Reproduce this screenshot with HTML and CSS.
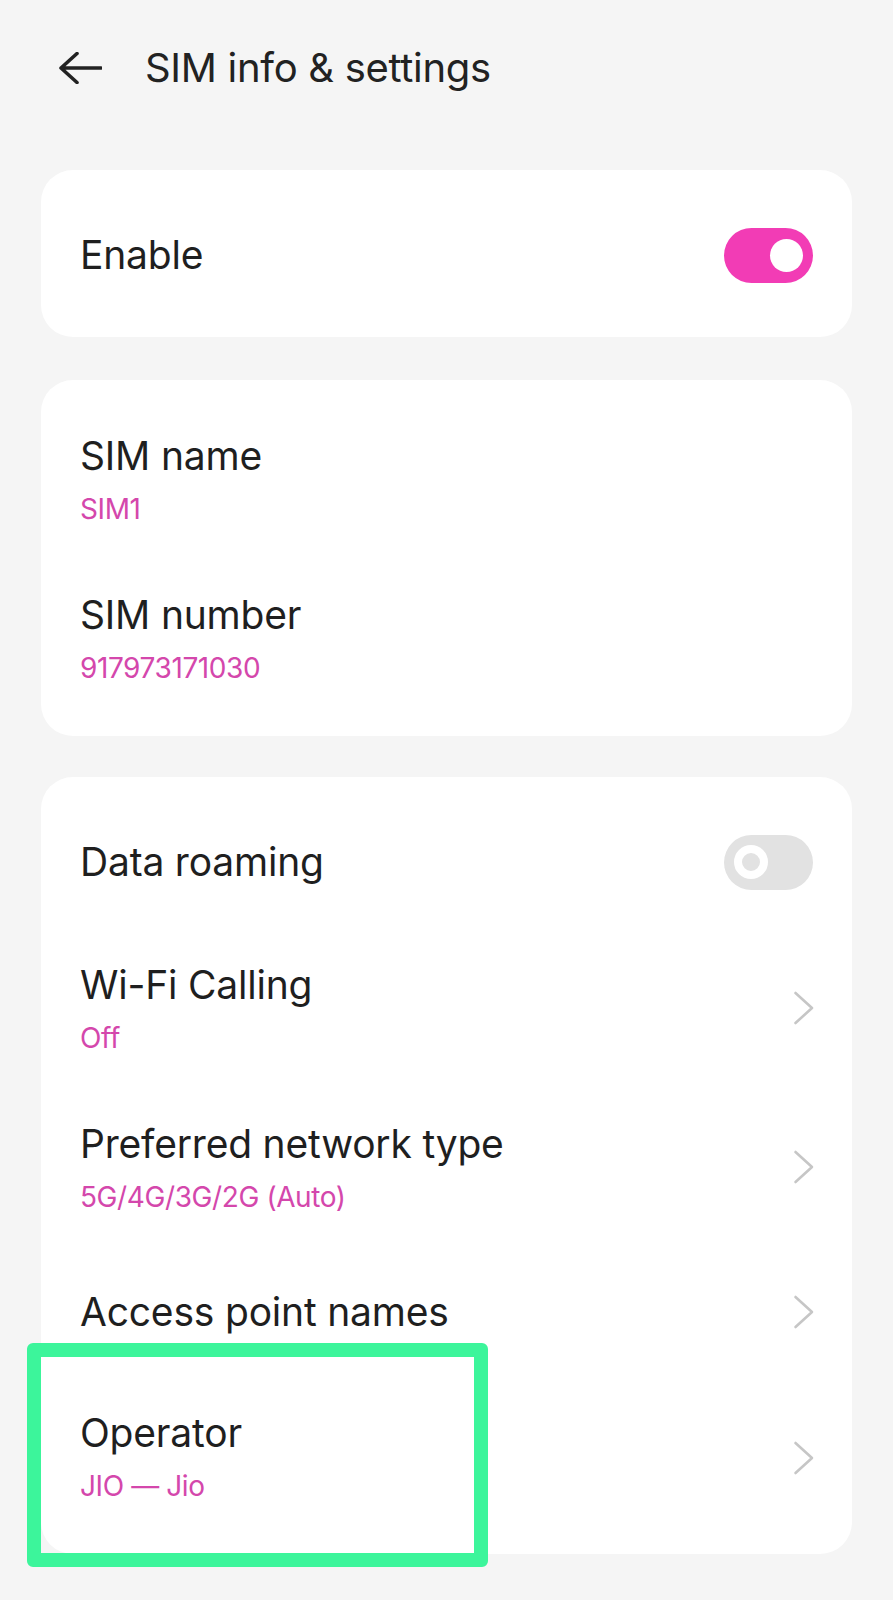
FILE: index.html
```html
<!DOCTYPE html>
<html lang="en">
<head>
<meta charset="utf-8">
<title>SIM info &amp; settings</title>
<link rel="stylesheet" href="styles.css">
</head>
<body>
<div class="page">
  <header class="header">
    <svg class="back" width="44" height="32" viewBox="0 0 44 32" aria-hidden="true">
      <path d="M3 16 H43 M19 1.5 L3 16 L19 30.5" fill="none" stroke="#222" stroke-width="3.6" stroke-linecap="round" stroke-linejoin="round"/>
    </svg>
    <h1 class="title">SIM info &amp; settings</h1>
  </header>

  <section class="card card-enable">
    <div class="row row-single row-enable">
      <div class="row-text"><div class="row-title">Enable</div></div>
      <div class="switch switch-on"><span class="knob"></span></div>
    </div>
  </section>

  <section class="card">
    <div class="row row-double">
      <div class="row-text">
        <div class="row-title">SIM name</div>
        <div class="row-sub">SIM1</div>
      </div>
    </div>
    <div class="row row-double">
      <div class="row-text">
        <div class="row-title">SIM number</div>
        <div class="row-sub">917973171030</div>
      </div>
    </div>
  </section>

  <section class="card card-network">
    <div class="row row-single">
      <div class="row-text"><div class="row-title">Data roaming</div></div>
      <div class="switch switch-off"><span class="knob"></span></div>
    </div>
    <div class="row row-double">
      <div class="row-text">
        <div class="row-title">Wi-Fi Calling</div>
        <div class="row-sub">Off</div>
      </div>
      <svg class="chev" width="22" height="34" viewBox="0 0 22 34" aria-hidden="true"><path d="M2.5 2 L19 17 L2.5 32" fill="none" stroke="#c6c6c6" stroke-width="2.6" stroke-linecap="round" stroke-linejoin="round"/></svg>
    </div>
    <div class="row row-double">
      <div class="row-text">
        <div class="row-title">Preferred network type</div>
        <div class="row-sub">5G/4G/3G/2G (Auto)</div>
      </div>
      <svg class="chev" width="22" height="34" viewBox="0 0 22 34" aria-hidden="true"><path d="M2.5 2 L19 17 L2.5 32" fill="none" stroke="#c6c6c6" stroke-width="2.6" stroke-linecap="round" stroke-linejoin="round"/></svg>
    </div>
    <div class="row row-single">
      <div class="row-text"><div class="row-title">Access point names</div></div>
      <svg class="chev" width="22" height="34" viewBox="0 0 22 34" aria-hidden="true"><path d="M2.5 2 L19 17 L2.5 32" fill="none" stroke="#c6c6c6" stroke-width="2.6" stroke-linecap="round" stroke-linejoin="round"/></svg>
    </div>
    <div class="row row-double row-operator">
      <div class="highlight"></div>
      <div class="row-text">
        <div class="row-title">Operator</div>
        <div class="row-sub">JIO — Jio</div>
      </div>
      <svg class="chev" width="22" height="34" viewBox="0 0 22 34" aria-hidden="true"><path d="M2.5 2 L19 17 L2.5 32" fill="none" stroke="#c6c6c6" stroke-width="2.6" stroke-linecap="round" stroke-linejoin="round"/></svg>
    </div>
  </section>
</div>
</body>
</html>
```

FILE: styles.css
```css
html, body {
  margin: 0;
  padding: 0;
  background: #f5f5f5;
}

body {
  font-family: Inter, "Noto Sans", Roboto, sans-serif;
  color: #1f1f1f;
}

.page {
  width: 893px;
  padding-bottom: 47px;
}

.header {
  height: 136px;
  display: flex;
  align-items: center;
  padding-left: 58px;
  box-sizing: border-box;
}

.back {
  display: block;
  flex: none;
}

.title {
  margin: 0 0 0 43px;
  font-size: 40px;
  font-weight: 400;
  line-height: 48px;
  color: #222;
  letter-spacing: -0.3px;
}

.card {
  background: #fff;
  border-radius: 32px;
  margin: 0 41px;
  padding: 19px 0;
}

.card-enable {
  margin-top: 34px;
  padding: 19px 0;
}

.card + .card {
  margin-top: 43px;
}

.card + .card-network {
  margin-top: 41px;
  padding-bottom: 17px;
}

.row {
  position: relative;
  display: flex;
  align-items: center;
  justify-content: space-between;
  padding: 0 39px 0 39px;
  box-sizing: border-box;
}

.row-single {
  height: 132px;
}

.row-enable {
  height: 129px;
  padding-top: 3px;
}

.row-double {
  height: 159px;
}

.row-text {
  display: flex;
  flex-direction: column;
}

.row-double .row-text {
  padding-top: 4px;
}

.row-operator .row-text {
  padding-top: 0;
}

.row-title {
  font-size: 39px;
  line-height: 44px;
  color: #1f1f1f;
  letter-spacing: -0.2px;
}

.row-sub {
  margin-top: 13px;
  font-size: 28px;
  line-height: 36px;
  color: #d447ac;
  letter-spacing: -0.4px;
}

.switch {
  width: 89px;
  height: 55px;
  border-radius: 28px;
  box-sizing: border-box;
  position: relative;
  flex: none;
}

.switch-on {
  background: #f23cb5;
}

.switch-on .knob {
  position: absolute;
  top: 11px;
  right: 10px;
  width: 33px;
  height: 33px;
  border-radius: 50%;
  background: #fff;
}

.switch-off {
  background: #e2e2e2;
}

.switch-off .knob {
  position: absolute;
  top: 10px;
  left: 10px;
  width: 34px;
  height: 34px;
  border-radius: 50%;
  box-sizing: border-box;
  border: 8px solid #fff;
  background: #e2e2e2;
}

.chev {
  display: block;
  flex: none;
  margin-right: -2px;
}

.highlight {
  position: absolute;
  top: -35px;
  left: -14px;
  width: 461px;
  height: 224px;
  box-sizing: border-box;
  border: 14px solid #3cf59b;
  border-radius: 6px;
  pointer-events: none;
}
```
